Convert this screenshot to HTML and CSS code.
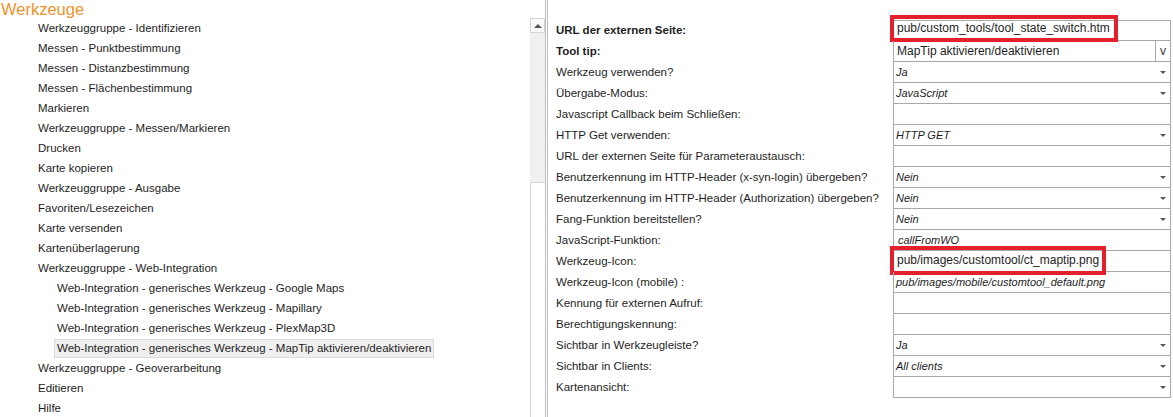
FILE: index.html
```html
<!DOCTYPE html>
<html>
<head>
<meta charset="utf-8">
<link rel="stylesheet" href="styles.css">
</head>
<body>
<div class="page">
  <div class="tree">
    <div class="title">Werkzeuge</div>
    <ul class="items">
      <li>Werkzeuggruppe - Identifizieren</li>
      <li>Messen - Punktbestimmung</li>
      <li>Messen - Distanzbestimmung</li>
      <li>Messen - Flächenbestimmung</li>
      <li>Markieren</li>
      <li>Werkzeuggruppe - Messen/Markieren</li>
      <li>Drucken</li>
      <li>Karte kopieren</li>
      <li>Werkzeuggruppe - Ausgabe</li>
      <li>Favoriten/Lesezeichen</li>
      <li>Karte versenden</li>
      <li>Kartenüberlagerung</li>
      <li>Werkzeuggruppe - Web-Integration</li>
      <li class="sub">Web-Integration - generisches Werkzeug - Google Maps</li>
      <li class="sub">Web-Integration - generisches Werkzeug - Mapillary</li>
      <li class="sub">Web-Integration - generisches Werkzeug - PlexMap3D</li>
      <li class="sub"><span class="selected">Web-Integration - generisches Werkzeug - MapTip aktivieren/deaktivieren</span></li>
      <li>Werkzeuggruppe - Geoverarbeitung</li>
      <li>Editieren</li>
      <li>Hilfe</li>
    </ul>
  </div>
  <div class="scrollbar">
    <div class="sb-up"><span class="sb-arrow"></span></div>
    <div class="sb-track"></div>
    <div class="sb-thumb"></div>
  </div>
  <div class="grid">
    <div class="row"><div class="label bold">URL der externen Seite:</div><div class="value plain"><span class="hl hl1">pub/custom_tools/tool_state_switch.htm</span></div></div>
    <div class="row"><div class="label bold">Tool tip:</div><div class="value plain split"><span class="txt">MapTip aktivieren/deaktivieren</span><span class="vbtn">v</span></div></div>
    <div class="row"><div class="label">Werkzeug verwenden?</div><div class="value dd">Ja</div></div>
    <div class="row"><div class="label">Übergabe-Modus:</div><div class="value dd">JavaScript</div></div>
    <div class="row"><div class="label">Javascript Callback beim Schließen:</div><div class="value"></div></div>
    <div class="row"><div class="label">HTTP Get verwenden:</div><div class="value dd">HTTP GET</div></div>
    <div class="row"><div class="label">URL der externen Seite für Parameteraustausch:</div><div class="value"></div></div>
    <div class="row"><div class="label">Benutzerkennung im HTTP-Header (x-syn-login) übergeben?</div><div class="value dd">Nein</div></div>
    <div class="row"><div class="label">Benutzerkennung im HTTP-Header (Authorization) übergeben?</div><div class="value dd">Nein</div></div>
    <div class="row"><div class="label">Fang-Funktion bereitstellen?</div><div class="value dd">Nein</div></div>
    <div class="row"><div class="label">JavaScript-Funktion:</div><div class="value indent">callFromWO</div></div>
    <div class="row"><div class="label">Werkzeug-Icon:</div><div class="value plain"><span class="hl hl2">pub/images/customtool/ct_maptip.png</span></div></div>
    <div class="row"><div class="label">Werkzeug-Icon (mobile) :</div><div class="value">pub/images/mobile/customtool_default.png</div></div>
    <div class="row"><div class="label">Kennung für externen Aufruf:</div><div class="value"></div></div>
    <div class="row"><div class="label">Berechtigungskennung:</div><div class="value"></div></div>
    <div class="row"><div class="label">Sichtbar in Werkzeugleiste?</div><div class="value dd">Ja</div></div>
    <div class="row"><div class="label">Sichtbar in Clients:</div><div class="value dd">All clients</div></div>
    <div class="row"><div class="label">Kartenansicht:</div><div class="value dd"></div></div>
  </div>
</div>
</body>
</html>
```

FILE: styles.css
```css
html, body {
  margin: 0;
  padding: 0;
  background: #ffffff;
}
body {
  font-family: "Liberation Sans", Arial, sans-serif;
  font-size: 11.5px;
  color: #1e1e1e;
}
.page {
  display: flex;
  height: 417px;
  overflow: hidden;
}
.tree {
  width: 530px;
  flex: none;
}
.title {
  font-size: 16.5px;
  line-height: 18px;
  color: #f0922b;
  padding-left: 1px;
}
.items {
  list-style: none;
  margin: 0;
  padding: 0;
}
.items li {
  height: 20px;
  line-height: 20px;
  padding-left: 38px;
  white-space: nowrap;
}
.items li.sub {
  padding-left: 57px;
}
.selected {
  display: inline-block;
  height: 17px;
  line-height: 17px;
  padding: 0 2px;
  margin-left: -3px;
  background: #efefef;
  border: 1px solid #dcdcdc;
}
.scrollbar {
  width: 15px;
  flex: none;
  margin-top: 18px;
  display: flex;
  flex-direction: column;
}
.sb-up {
  height: 15px;
  border: 1px solid #d6d6d6;
  background: #fafafa;
  box-sizing: border-box;
  display: flex;
  align-items: center;
  justify-content: center;
}
.sb-arrow {
  width: 0;
  height: 0;
  border-left: 4px solid transparent;
  border-right: 4px solid transparent;
  border-bottom: 4px solid #555;
}
.sb-track {
  height: 149px;
  background: #f0f0f0;
}
.sb-thumb {
  flex: 1;
  border-left: 1px solid #d6d6d6;
  border-top: 1px solid #d6d6d6;
  background: #fff;
}
.grid {
  flex: 1;
  border-left: 1px solid #bdbdbd;
  padding-left: 2px;
  padding-top: 20px;
  position: relative;
}
.grid::before {
  content: "";
  position: absolute;
  left: 1px;
  top: 0;
  bottom: 0;
  border-left: 1px solid #bdbdbd;
}
.row {
  display: flex;
  height: 21px;
}
.label {
  width: 337px;
  padding-left: 8px;
  line-height: 21px;
  white-space: nowrap;
  flex: none;
}
.label.bold {
  font-weight: bold;
}
.value {
  width: 278px;
  flex: none;
  border-left: 1px solid #a8a8a8;
  border-right: 1px solid #a8a8a8;
  border-bottom: 1px solid #a8a8a8;
  box-sizing: border-box;
  height: 21px;
  line-height: 20px;
  font-style: italic;
  font-size: 11px;
  padding-left: 2px;
  white-space: nowrap;
  position: relative;
}
.row:first-child .value {
  border-top: 1px solid #a8a8a8;
  line-height: 19px;
}
.value.indent {
  padding-left: 4px;
}
.value.plain {
  font-style: normal;
  font-size: 12px;
  padding-left: 3px;
}
.value.split {
  display: flex;
  padding-right: 0;
}
.value.split .txt {
  flex: 1;
}
.vbtn {
  width: 14px;
  border-left: 1px solid #a8a8a8;
  text-align: center;
  color: #3a3a3a;
}
.value.dd::after {
  content: "";
  position: absolute;
  right: 4px;
  top: 9px;
  width: 0;
  height: 0;
  border-left: 3px solid transparent;
  border-right: 3px solid transparent;
  border-top: 3px solid #555;
}
.hl {
  position: absolute;
  border: 4px solid #e3202b;
  box-sizing: border-box;
  padding-left: 3px;
}
.hl1 {
  left: -4px;
  top: -6px;
  width: 228px;
  height: 27px;
  line-height: 19px;
}
.hl2 {
  left: -4px;
  top: -5px;
  width: 216px;
  height: 29px;
  line-height: 21px;
}
```
